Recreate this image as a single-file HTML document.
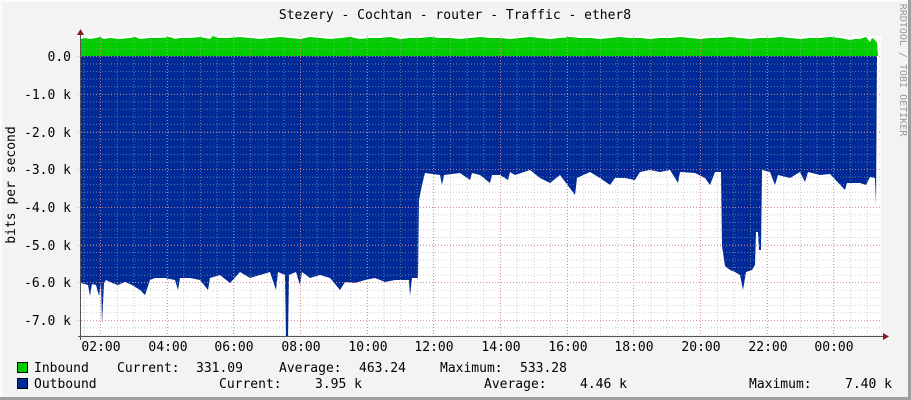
<!DOCTYPE html>
<html><head><meta charset="utf-8"><style>
html,body{margin:0;padding:0;background:#f3f3f3;}
svg{display:block;}
text{font-family:"DejaVu Sans Mono","Liberation Mono",monospace;font-size:13px;fill:#000;}
</style></head><body>
<svg width="911" height="400" xmlns="http://www.w3.org/2000/svg">
<defs>
<pattern id="gv" patternUnits="userSpaceOnUse" x="83.33" y="0" width="16.667" height="400">
<line x1="0.5" y1="0" x2="0.5" y2="400" stroke="#aaa" stroke-width="1" stroke-dasharray="1,2" stroke-opacity="0.6"/>
</pattern>
<pattern id="gh" patternUnits="userSpaceOnUse" x="0" y="56" width="900" height="7.54">
<line x1="0" y1="0.5" x2="900" y2="0.5" stroke="#aaa" stroke-width="1" stroke-dasharray="1,2" stroke-opacity="0.6"/>
</pattern>
</defs>
<rect x="0" y="0" width="911" height="400" fill="#f3f3f3"/>
<rect x="0" y="0" width="911" height="2" fill="#fcfcfc"/>
<rect x="0" y="0" width="2" height="400" fill="#fcfcfc"/>
<rect x="0" y="397" width="911" height="3" fill="#9e9e9e"/>
<rect x="908" y="0" width="3" height="400" fill="#9e9e9e"/>
<rect x="81" y="36" width="800" height="301" fill="#fff"/>
<polygon fill="#00cc00" points="81,56 81,39 84,38 90,39 96,38 100,37 104,39 110,38 120,39 130,38 135,37 140,39 150,38 160,38 170,37 175,39 180,38 190,38 200,37 210,39 213,36 218,38 228,38 240,37 250,38 260,39 270,38 280,37 290,38 300,39 310,37 320,38 330,39 340,38 350,37 360,39 370,38 380,38 390,37 400,39 410,38 420,38 430,37 440,38 450,38 460,39 470,38 480,37 490,38 500,38 510,39 520,38 530,37 540,38 550,39 560,38 570,37 580,38 590,38 600,39 610,38 620,37 630,38 640,38 650,39 660,38 670,38 680,37 690,38 700,39 710,38 720,38 730,37 740,38 750,39 760,38 770,38 780,37 790,38 800,39 810,38 820,38 830,37 840,38 850,40 855,39 860,39 866,37 870,42 872,38 875,40 877,43 878,56"/>
<polygon fill="#002a97" points="81,56 81,283 88,285 90,296 92,284 96,285 99,296 101,283 102,324 104,283 106,280 112,283 118,285 125,282 132,285 140,290 145,295 150,280 155,278 165,278 175,280 178,290 180,278 190,278 200,280 208,290 210,278 220,275 230,283 240,272 250,278 260,275 270,272 276,290 278,272 285,275 286,337 288,337 289,275 296,272 300,285 302,272 310,278 320,275 330,278 340,290 345,282 355,283 365,280 375,278 385,282 395,280 409,280 410,296 412,278 418,278 419,200 422,185 425,173 440,175 442,185 444,175 460,173 470,180 472,173 480,175 490,183 492,175 500,175 508,180 510,172 515,175 530,170 540,178 550,183 560,175 575,195 577,178 590,172 600,178 610,185 615,178 625,178 635,180 640,172 650,170 660,172 670,170 678,183 680,172 695,173 705,178 710,185 715,172 721,172 722,246 725,266 730,270 735,272 740,275 743,290 746,272 752,270 755,265 756,232 758,232 759,250 761,250 762,170 770,172 775,185 778,175 790,178 800,172 805,182 808,172 820,175 830,174 845,190 847,183 860,183 866,185 870,177 875,178 876,205 877,56"/>
<rect x="81" y="36" width="800" height="301" fill="url(#gv)"/>
<rect x="81" y="36" width="800" height="301" fill="url(#gh)"/>
<g stroke="#e08080" stroke-width="1" stroke-dasharray="1,2" stroke-opacity="0.8">
<line x1="100.5" y1="36" x2="100.5" y2="337"/><line x1="167.5" y1="36" x2="167.5" y2="337"/><line x1="233.5" y1="36" x2="233.5" y2="337"/><line x1="300.5" y1="36" x2="300.5" y2="337"/><line x1="367.5" y1="36" x2="367.5" y2="337"/><line x1="433.5" y1="36" x2="433.5" y2="337"/><line x1="500.5" y1="36" x2="500.5" y2="337"/><line x1="567.5" y1="36" x2="567.5" y2="337"/><line x1="633.5" y1="36" x2="633.5" y2="337"/><line x1="700.5" y1="36" x2="700.5" y2="337"/><line x1="767.5" y1="36" x2="767.5" y2="337"/><line x1="833.5" y1="36" x2="833.5" y2="337"/>
<line x1="78" y1="56.5" x2="881" y2="56.5"/><line x1="78" y1="94.5" x2="881" y2="94.5"/><line x1="78" y1="132.5" x2="881" y2="132.5"/><line x1="78" y1="169.5" x2="881" y2="169.5"/><line x1="78" y1="207.5" x2="881" y2="207.5"/><line x1="78" y1="245.5" x2="881" y2="245.5"/><line x1="78" y1="282.5" x2="881" y2="282.5"/><line x1="78" y1="320.5" x2="881" y2="320.5"/>
</g>
<line x1="80.5" y1="33" x2="80.5" y2="340" stroke="#555" stroke-width="1"/>
<line x1="78" y1="336.5" x2="884" y2="336.5" stroke="#555" stroke-width="1"/>
<polygon points="77,35 84,35 80.5,29" fill="#8b1a1a"/>
<polygon points="883,333 883,340 889,336.5" fill="#8b1a1a"/>
<text x="455" y="19" text-anchor="middle">Stezery - Cochtan - router - Traffic - ether8</text>
<g text-anchor="end">
<text x="71" y="61">0.0</text><text x="71" y="99">-1.0 k</text><text x="71" y="137">-2.0 k</text><text x="71" y="174">-3.0 k</text><text x="71" y="212">-4.0 k</text><text x="71" y="250">-5.0 k</text><text x="71" y="287">-6.0 k</text><text x="71" y="325">-7.0 k</text>
</g>
<text transform="translate(15,185) rotate(-90)" text-anchor="middle">bits per second</text>
<text transform="translate(900,70) rotate(90)" text-anchor="middle" style="font-size:10px;fill:#999">RRDTOOL / TOBI OETIKER</text>
<g text-anchor="middle">
<text x="101" y="351">02:00</text><text x="168" y="351">04:00</text><text x="234" y="351">06:00</text><text x="301" y="351">08:00</text><text x="368" y="351">10:00</text><text x="434" y="351">12:00</text><text x="501" y="351">14:00</text><text x="568" y="351">16:00</text><text x="634" y="351">18:00</text><text x="701" y="351">20:00</text><text x="768" y="351">22:00</text><text x="834" y="351">00:00</text>
</g>
<rect x="17.5" y="362.5" width="10" height="10" fill="#00cc00" stroke="#000"/>
<rect x="17.5" y="378.5" width="10" height="10" fill="#002a97" stroke="#000"/>
<text x="34" y="372">Inbound</text>
<text x="117" y="372">Current:</text><text x="196" y="372">331.09</text>
<text x="279" y="372">Average:</text><text x="359" y="372">463.24</text>
<text x="440" y="372">Maximum:</text><text x="520" y="372">533.28</text>
<text x="34" y="388">Outbound</text>
<text x="219" y="388">Current:</text><text x="315" y="388">3.95 k</text>
<text x="484" y="388">Average:</text><text x="580" y="388">4.46 k</text>
<text x="749" y="388">Maximum:</text><text x="845" y="388">7.40 k</text>
</svg>
</body></html>
